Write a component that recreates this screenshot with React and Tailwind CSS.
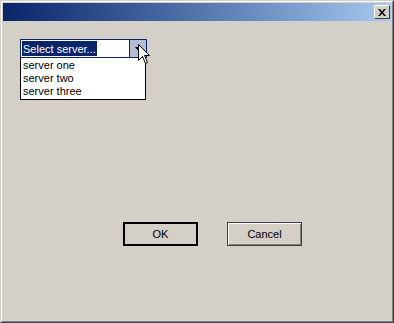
import React from "react";

const items = ["server one", "server two", "server three"];

const App = () => {
  return (
    <div
      className="relative w-[394px] h-[323px] bg-[#d4d0c8] border border-t-[#d4d0c8] border-l-[#d4d0c8] border-r-[#404040] border-b-[#404040] text-[11px] text-black"
      style={{ fontFamily: '"Liberation Sans", Arial, sans-serif' }}
    >
      <div className="h-full border border-t-white border-l-white border-r-[#808080] border-b-[#808080] p-px flex flex-col">
        {/* title bar */}
        <div className="h-[18px] flex items-center justify-end pr-[1px] bg-gradient-to-r from-[#0a246a] to-[#a6caf0]">
          <div className="w-[16px] h-[14px] bg-[#d4d0c8] border border-t-white border-l-white border-r-[#404040] border-b-[#404040] flex items-center justify-center">
            <svg width="8" height="7" viewBox="0 0 8 7">
              <path d="M0 0h2l2 2.5L6 0h2L5 3.5 8 7H6L4 4.5 2 7H0l3-3.5z" fill="#000" />
            </svg>
          </div>
        </div>

        {/* body */}
        <div className="flex-1 pl-[17px] pt-[18px] flex flex-col">
          <div className="w-[127px]">
            <div className="h-[19px] flex border border-[#0a246a] bg-white">
              <div className="flex-1 p-px flex">
                <span className="bg-[#0a246a] text-white leading-[17px] px-px">
                  Select server...
                </span>
              </div>
              <div className="w-[17px] bg-[#b6bdd2] border-l border-[#0a246a] flex items-center justify-center">
                <svg width="7" height="4" viewBox="0 0 7 4">
                  <path d="M0 0h7L3.5 4z" fill="#000" />
                </svg>
              </div>
            </div>
            <div className="w-[126px] bg-white border border-[#000] border-t-0 pt-px pb-px">
              {items.map((item, index) => (
                <div key={index} className="h-[13px] leading-[13px] pl-[2px]">
                  {item}
                </div>
              ))}
            </div>
          </div>

          <div className="mt-[122px] ml-[103px] flex gap-[29px]">
            <button className="w-[75px] h-[24px] border-2 border-black bg-[#d4d0c8] flex items-center justify-center">
              OK
            </button>
            <button className="w-[75px] h-[24px] border border-[#404040] bg-[#d4d0c8] shadow-[inset_1px_1px_0_#fff,inset_-1px_-1px_0_#808080] flex items-center justify-center">
              Cancel
            </button>
          </div>
        </div>
      </div>

      {/* mouse pointer */}
      <svg
        className="absolute left-[137px] top-[43px]"
        width="13"
        height="21"
        viewBox="0 0 13 21"
      >
        <path
          d="M0.5 0.5V16.5L4.5 12.5L7.5 19.5L9.5 18.5L6.5 11.5H11.5Z"
          fill="#fff"
          stroke="#000"
          strokeWidth="1"
        />
      </svg>
    </div>
  );
};

export default App;
